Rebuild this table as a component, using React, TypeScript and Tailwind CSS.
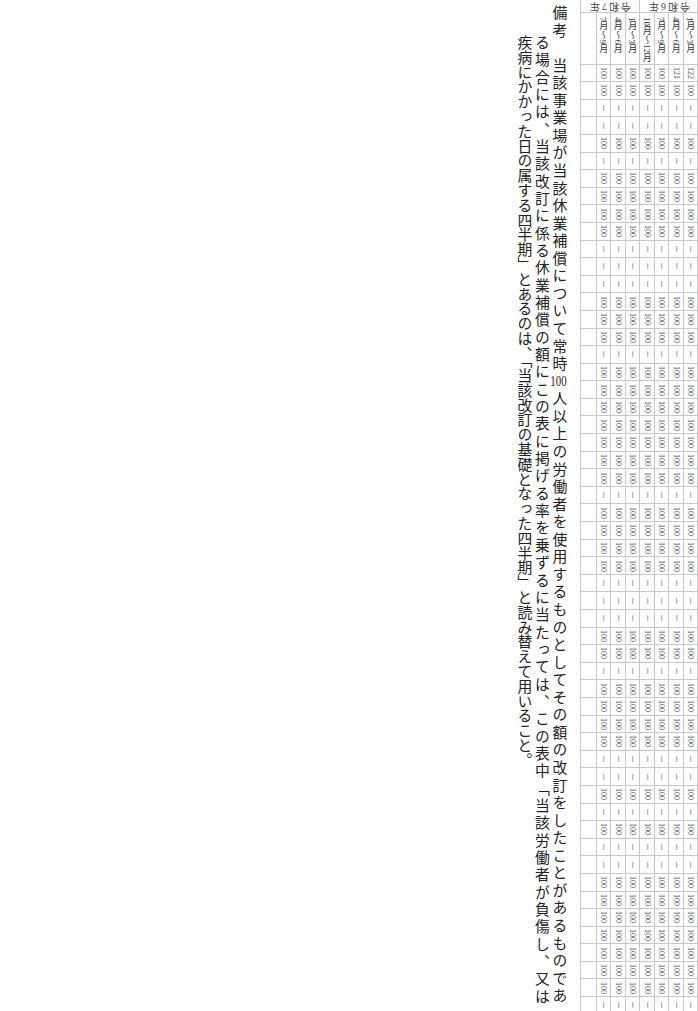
const ROWS: string[] = [
  "100", "－", "－", "100", "－", "100", "100", "100", "100", "－",
  "－", "－", "100", "100", "100", "－", "100", "100", "100", "100",
  "100", "100", "100", "－", "100", "100", "100", "100", "－", "－",
  "－", "100", "100", "－", "100", "100", "100", "100", "－", "－",
  "100", "－", "100", "－", "－", "100", "100", "100", "100", "100",
  "100", "100", "－", "100", "100",
];

type ColProps = { label: string; first: string; blank?: boolean; wide?: boolean };

function Col({ label, first, blank, wide }: ColProps) {
  return (
    <div className={`flex flex-col border-l border-[#c8c8c8] ${wide ? "w-[16px]" : "w-[14.5px]"}`}>
      <div className="flex h-[51.6px] justify-center overflow-hidden border-b border-[#c8c8c8] pt-[4px]">
        <span className="whitespace-nowrap text-[9px] leading-[10px] text-[#333] [writing-mode:vertical-rl]">
          {label}
        </span>
      </div>
      {[first, ...ROWS].map((v, i) => (
        <div key={i} className="flex h-[17.6px] shrink-0 items-center justify-center border-b border-[#c8c8c8]">
          {!blank && (
            <span className="text-[8px] leading-none text-[#555] [writing-mode:vertical-rl]">{v}</span>
          )}
        </div>
      ))}
    </div>
  );
}

function YearGroup({ year, children }: { year: string; children: React.ReactNode }) {
  return (
    <div className="flex flex-col">
      <div className="flex h-[13px] items-center justify-center border-b border-l border-[#c8c8c8]">
        <span className="inline-block rotate-180 text-[10px] leading-none tracking-[2px] text-[#444]">{year}</span>
      </div>
      <div className="flex flex-row-reverse">{children}</div>
    </div>
  );
}

export default function App() {
  return (
    <div className="flex h-[1011px] justify-end gap-[13px] overflow-hidden bg-white [font-family:'Liberation_Serif','Noto_Sans_CJK_JP',serif]">
      <div className="h-full pt-[5px] pb-[8px] text-[14.8px] leading-[17.5px] text-[#222] [writing-mode:vertical-rl]">
        <div className="[text-align-last:justify]">
          備考　当該事業場が当該休業補償について常時
          <span className="[text-combine-upright:all]">100</span>
          人以上の労働者を使用するものとしてその額の改訂をしたことがあるものであ
        </div>
        <div className="pt-[2em] [text-align-last:justify]">
          る場合には、当該改訂に係る休業補償の額にこの表に掲げる率を乗ずるに当たっては、この表中「当該労働者が負傷し、又は
        </div>
        <div className="pt-[2em]">
          疾病にかかった日の属する四半期」とあるのは、「当該改訂の基礎となった四半期」と読み替えて用いること。
        </div>
      </div>

      <div className="flex h-max flex-row-reverse border-r border-[#c8c8c8]">
        <YearGroup year="令和6年">
          <Col label="1月～3月" first="122" />
          <Col label="4月～6月" first="121" />
          <Col label="7月～9月" first="100" />
          <Col label="10月～12月" first="100" />
        </YearGroup>
        <YearGroup year="令和7年">
          <Col label="1月～3月" first="100" />
          <Col label="4月～6月" first="100" />
          <Col label="7月～9月" first="100" />
          <Col label="" first="" blank wide />
        </YearGroup>
      </div>
    </div>
  );
}
